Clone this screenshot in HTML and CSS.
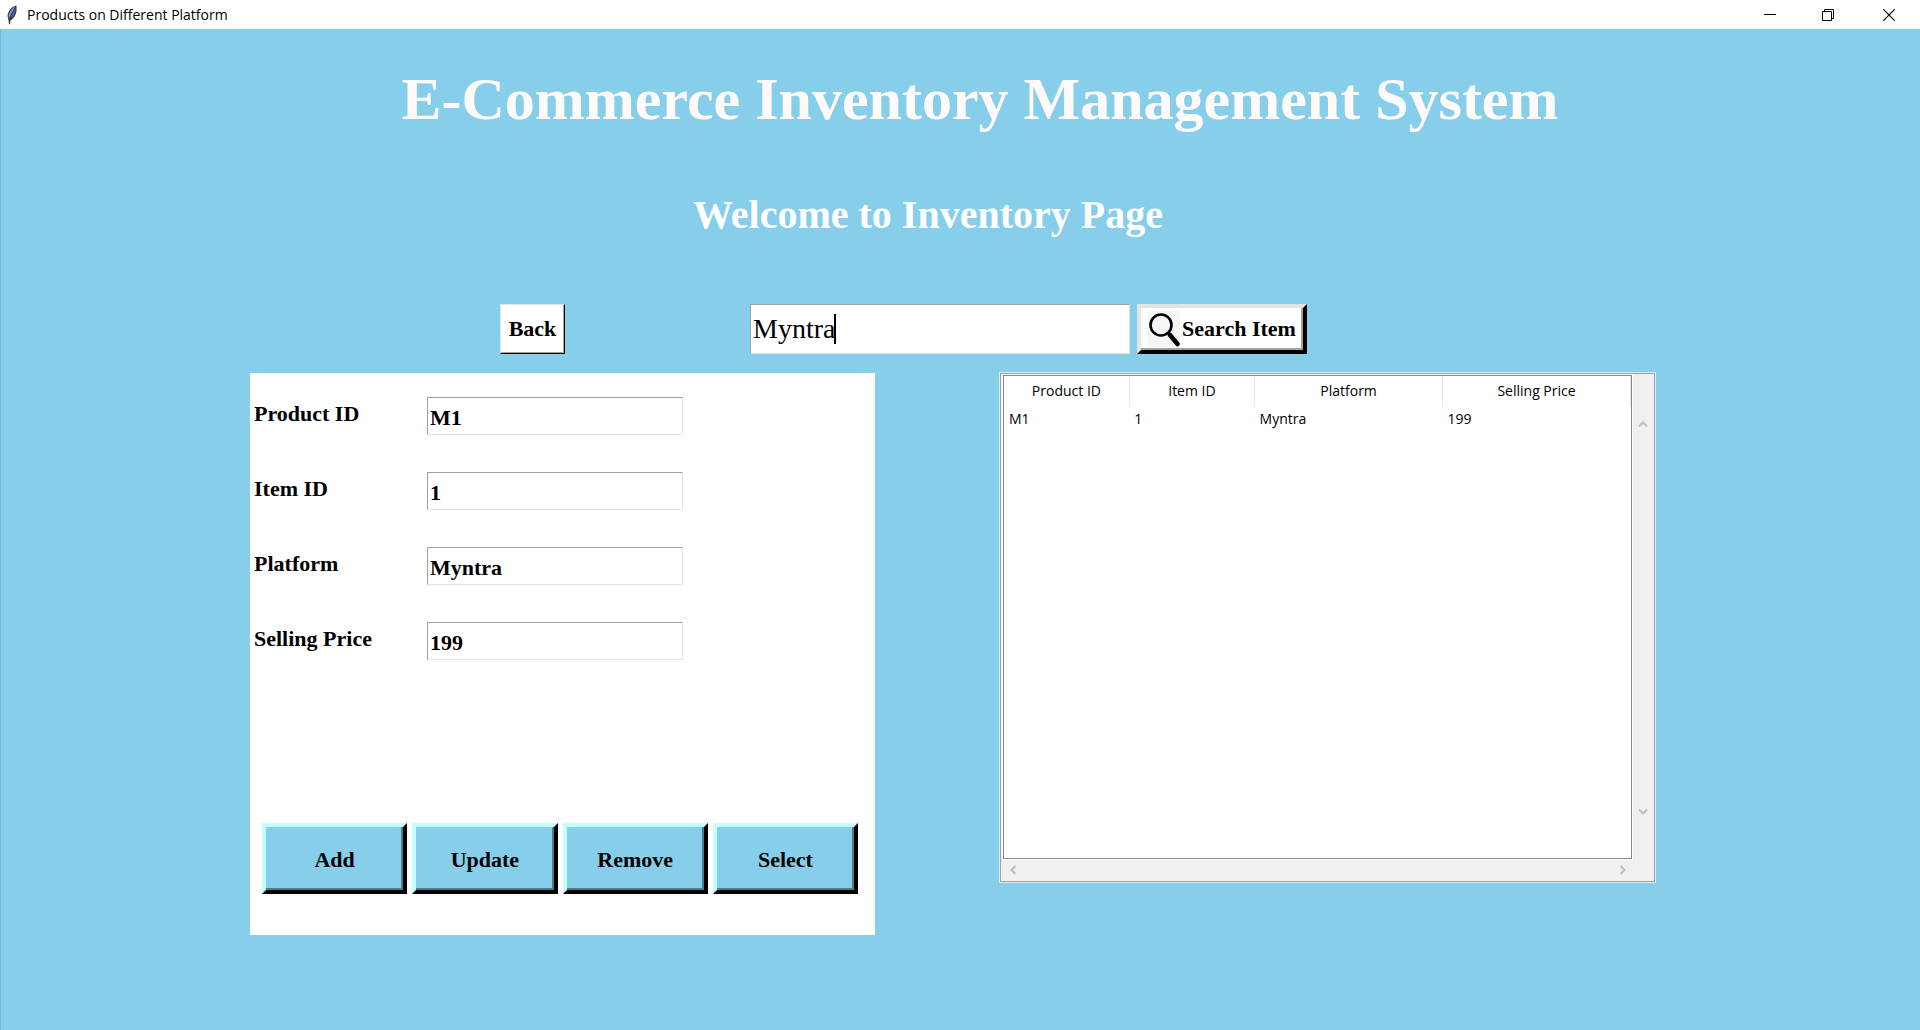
FILE: index.html
```html
<!DOCTYPE html>
<html lang="en">
<head>
<meta charset="utf-8">
<title>Products on Different Platform</title>
<link rel="stylesheet" href="styles.css">
</head>
<body>
<header class="titlebar">
  <svg class="feather" width="12" height="20" viewBox="0 0 12 20" aria-hidden="true">
    <path d="M10.500 0.500C6 1 2 6 1.500 11L2.500 15L3 19.500L4 19L4.500 15.500C8 13 10 10 10.500 6Z" fill="#2b3440"/>
    <path d="M9.500 1.500C6 3 3 7 2.500 11L3 13.500C5 9 7 5 9.500 1.500Z" fill="#7e9cc4"/>
    <path d="M9.800 3C7.500 6 5.500 10 4.500 13.500C7.500 11.500 9.500 9 9.800 3Z" fill="#3f6dab"/>
  </svg>
  <span class="titlebar-text">Products on Different Platform</span>
  <div class="window-controls">
    <button class="window-button" type="button" aria-label="Minimize">
      <svg width="12" height="12" viewBox="0 0 12 12"><path d="M0 5.500H12" stroke="#000" fill="none"/></svg>
    </button>
    <button class="window-button" type="button" aria-label="Restore">
      <svg width="12" height="12" viewBox="0 0 12 12"><path d="M0.500 2.500H9.500V11.500H0.500ZM2.500 2.500V0.500H11.500V9.500H9.500" stroke="#000" fill="none"/></svg>
    </button>
    <button class="window-button" type="button" aria-label="Close">
      <svg width="12" height="12" viewBox="0 0 12 12"><path d="M0.300 0.300L11.700 11.700M11.700 0.300L0.300 11.700" stroke="#000" stroke-width="1.200" fill="none"/></svg>
    </button>
  </div>
</header>
<main class="page">
  <h1 class="title">E-Commerce Inventory Management System</h1>
  <h2 class="subtitle">Welcome to Inventory Page</h2>

  <form class="toolbar">
    <button class="back-button" type="button">Back</button>
    <div class="search-box">
      <input class="search-input" type="text" value="Myntra" aria-label="Search item">
      <span class="caret"></span>
    </div>
    <button class="raised search-button" type="button">
      <svg class="magnifier" width="32" height="36" viewBox="0 0 32 36" aria-hidden="true">
        <circle cx="13" cy="14" r="10.500" fill="none" stroke="#000" stroke-width="2.600"/>
        <path d="M19.500 21.500L22 24" stroke="#000" stroke-width="3"/>
        <path d="M22 24L29.500 33" stroke="#000" stroke-width="4.500" stroke-linecap="round"/>
      </svg>
      Search Item
    </button>
  </form>

  <div class="content">
    <form class="card">
      <div class="fields">
        <div class="field"><label for="product-id">Product ID</label><input id="product-id" type="text" value="M1"></div>
        <div class="field"><label for="item-id">Item ID</label><input id="item-id" type="text" value="1"></div>
        <div class="field"><label for="platform">Platform</label><input id="platform" type="text" value="Myntra"></div>
        <div class="field"><label for="price">Selling Price</label><input id="price" type="text" value="199"></div>
      </div>
      <div class="actions">
        <button class="raised action" type="button">Add</button>
        <button class="raised action" type="button">Update</button>
        <button class="raised action" type="button">Remove</button>
        <button class="raised action" type="button">Select</button>
      </div>
    </form>

    <section class="results">
      <div class="table-area">
        <table class="table">
          <colgroup><col class="col-small"><col class="col-small"><col class="col-large"><col class="col-large"></colgroup>
          <thead><tr><th>Product ID</th><th>Item ID</th><th>Platform</th><th>Selling Price</th></tr></thead>
          <tbody><tr><td>M1</td><td>1</td><td>Myntra</td><td>199</td></tr></tbody>
        </table>
      </div>
      <div class="scroll-vertical">
        <svg width="10" height="8" viewBox="0 0 10 8"><path d="M1 6.500L5 2.500L9 6.500" class="arrow"/></svg>
        <svg width="10" height="8" viewBox="0 0 10 8"><path d="M1 1.500L5 5.500L9 1.500" class="arrow"/></svg>
      </div>
      <div class="scroll-horizontal">
        <svg width="8" height="10" viewBox="0 0 8 10"><path d="M6.500 1L2.500 5L6.500 9" class="arrow"/></svg>
        <svg width="8" height="10" viewBox="0 0 8 10"><path d="M1.500 1L5.500 5L1.500 9" class="arrow"/></svg>
      </div>
    </section>
  </div>
</main>
</body>
</html>
```
FILE: styles.css
```css
* {
  box-sizing: border-box;
}

body {
  margin: 0;
  min-height: 100vh;
  display: flex;
  flex-direction: column;
  background: #87ceeb;
  color: #000;
  font-family: Georgia, "Liberation Serif", serif;
}

button,
input {
  margin: 0;
  border-radius: 0;
  color: inherit;
  font: inherit;
}

.titlebar {
  display: flex;
  align-items: center;
  height: 29px;
  padding-left: 6px;
  background: #fff;
  font: 14px/20px "Segoe UI", "Open Sans", sans-serif;
}

.feather {
  margin-right: 9px;
}

.window-controls {
  display: flex;
  margin-left: auto;
}

.window-button {
  display: flex;
  align-items: center;
  justify-content: center;
  width: 58px;
  height: 28px;
  padding: 0;
  border: 0;
  background: none;
}

.window-button:last-child {
  width: 63px;
}

.page {
  flex: 1;
  padding-bottom: 48px;
  box-shadow: inset 1px 0 #78b9d5;
}

.title {
  margin: 38px 0 0 40px;
  color: #fffafa;
  font-size: 60px;
  line-height: 64px;
  text-align: center;
}

.subtitle {
  margin: 62px 64px 0 0;
  color: #fff;
  font-size: 40px;
  line-height: 44px;
  text-align: center;
}

.toolbar {
  display: grid;
  grid-template-columns: 500fr 65fr 185fr 380fr 7fr 170fr 613fr;
  height: 50px;
  margin-top: 67px;
  font-size: 22px;
  font-weight: bold;
}

.back-button {
  grid-column: 2;
  padding: 0;
  border: 1px solid;
  border-color: #e3e3e3 #000 #000 #e3e3e3;
  background: #fff;
  box-shadow: inset -1px -1px #a0a0a0;
}

.search-box {
  grid-column: 4;
  position: relative;
}

.search-input {
  width: 100%;
  height: 100%;
  padding: 0 2px;
  border: 1px solid;
  border-color: #a0a0a0 #e3e3e3 #e3e3e3 #a0a0a0;
  background: #fff;
  font-size: 28px;
  font-weight: normal;
}

.caret {
  position: absolute;
  top: 10px;
  left: 84px;
  width: 2px;
  height: 30px;
  background: #000;
}

.raised {
  padding: 0;
  border: 4px solid;
  white-space: nowrap;
}

.search-button {
  grid-column: 6;
  display: flex;
  align-items: center;
  justify-content: center;
  gap: 2px;
  border-color: #e3e3e3 #000 #000 #e3e3e3;
  background: #fff;
  box-shadow: inset -2px -2px #a0a0a0;
}

.magnifier {
  background: #f5f5f5;
}

.content {
  display: grid;
  grid-template-columns: 250fr 625fr 125fr 655fr 265fr;
  align-items: start;
  margin-top: 19px;
}

.card {
  grid-column: 2;
  padding: 24px 17px 41px 4px;
  background: #fff;
  font-size: 22px;
  font-weight: bold;
}

.fields {
  display: grid;
  gap: 37px;
}

.field {
  display: grid;
  grid-template-columns: 173px 256px;
}

.field label {
  line-height: 34px;
}

.field input {
  height: 38px;
  padding: 4px 2px 0;
  border: 1px solid;
  border-color: #a0a0a0 #e3e3e3 #e3e3e3 #a0a0a0;
  background: #fff;
}

.actions {
  display: grid;
  grid-template-columns: repeat(4, 1fr);
  gap: 5px;
  margin: 163px 0 0 8px;
}

.action {
  height: 71px;
  padding-top: 2px;
  border-color: #c3ffff #000 #000 #c3ffff;
  background: #87ceeb;
  box-shadow: inset -2px -2px #4f7b8e;
}

.results {
  grid-column: 4;
  display: grid;
  grid-template-columns: 1fr 22px;
  border: 1px solid #a0a0a0;
  outline: 1px solid #d5edf7;
  background: #f0f0f0;
}

.table-area {
  height: 484px;
  border: 1px solid #828790;
  outline: 1px solid #fff;
  margin: 1px 0 0 2px;
  background: #fff;
}

.table {
  width: 100%;
  border-collapse: collapse;
  table-layout: fixed;
  font: 14px/20px "Segoe UI", "Open Sans", sans-serif;
}

.col-small {
  width: 20%;
}

.col-large {
  width: 30%;
}

.table th {
  height: 30px;
  padding: 0;
  border-right: 1px solid #e5e5e5;
  font-weight: normal;
}

.table td {
  height: 25px;
  padding: 0 5px;
}

.scroll-vertical,
.scroll-horizontal {
  display: flex;
  align-items: center;
  justify-content: space-between;
}

.scroll-vertical {
  flex-direction: column;
  padding: 46px 0 43px;
}

.scroll-horizontal {
  height: 22px;
  padding: 0 5px 0 8px;
}

.arrow {
  fill: none;
  stroke: #bfbfbf;
  stroke-width: 2;
}
```
